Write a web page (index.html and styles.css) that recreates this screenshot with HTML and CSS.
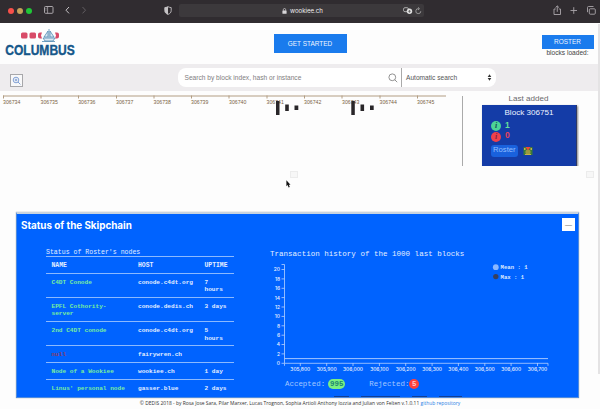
FILE: index.html
```html
<!DOCTYPE html>
<html lang="en">
<head>
<meta charset="utf-8">
<title>Columbus</title>
<link rel="stylesheet" href="styles.css">
</head>
<body>
<div class="window">
  <div class="browser">
    <div class="lights"><i class="red"></i><i class="amber"></i><i class="green"></i></div>
    <svg class="nav" width="44" height="10" viewBox="0 0 44 10" fill="none" stroke="#aaa6aa">
      <rect x=".5" y="1.5" width="8.5" height="6.8" rx="1"/><path d="M3.6 1.5v6.8M1.5 3.3h1M1.5 5h1" stroke-width=".8"/>
      <path d="M25 2l-3 3.2 3 3.2" stroke="#c8c5c8"/><path d="M38.5 2l3 3.2-3 3.2" stroke="#625e62"/>
    </svg>
    <svg class="shield" width="8" height="9" viewBox="0 0 8 9"><path d="M4 .7C2.8 1.3 1.8 1.5.8 1.6v3C.8 6.500 2 7.600 4 8.400 6 7.600 7.200 6.500 7.200 4.600v-3C6.200 1.500 5.200 1.300 4 .7z" fill="none" stroke="#c5c3c5" stroke-width=".9"/><path d="M4 .7v7.700C2 7.600.8 6.500.8 4.600v-3z" fill="#c5c3c5"/></svg>
    <div class="address">
      <svg width="5" height="6" viewBox="0 0 5 6"><rect x=".4" y="2.500" width="4.200" height="3.300" rx=".6" fill="#d8d6d8"/><path d="M1.300 2.800V1.700a1.200 1.200 0 0 1 2.400 0v1.100" fill="none" stroke="#d8d6d8" stroke-width=".7"/></svg>
      <span>wookiee.ch</span>
      <svg class="address-tools" width="19" height="8" viewBox="0 0 19 8" fill="none"><rect x=".5" y=".7" width="5" height="4" rx="1.500" stroke="#aaa"/><circle cx="6.500" cy="4.300" r="2.700" fill="#ddd"/><path d="M5.200 4.300h2.600M6.500 3v2.700" stroke="#555" stroke-width=".7"/><path d="M15.800 1.700a2.500 2.500 0 1 0 2 2.500M15 .3l1.500 1.400L15 3" stroke="#aaa" stroke-width=".8"/></svg>
    </div>
    <svg class="tools" width="44" height="11" viewBox="0 0 44 11" fill="none" stroke="#aaa6aa" stroke-width=".9">
      <path d="M2.700 4H1v5.500h6.500V4H5.800M4.250 6.800V1M2.500 2.600L4.250.9 6 2.600M17.500 5.500h6.500M20.750 2.200v6.600"/><rect x="36.300" y="3.800" width="6" height="5.400" rx="1"/><path d="M34.500 7.200V2.500a1 1 0 0 1 1-1h5"/>
    </svg>
  </div>

  <header class="header">
    <svg class="logo" width="72" height="33" viewBox="0 0 72 33">
      <g fill="#d84b68"><rect x="16" y="4.500" width="6.500" height="6" rx="1.500"/><rect x="24.500" y="4.500" width="6.500" height="6" rx="1.500"/><path d="M37 4.500h-2q-2 0-2 2v2q0 2 2 2h2l-1-3zM50 4.500h2q2 0 2 2v2q0 2-2 2h-2l1-3z"/></g>
      <path d="M44 1v9M43 3l-4 6h4zM45 3l4 6h-4zM38 10h12l-2 3h-8zM37 13.500h13" fill="#dbe8f2" stroke="#518bb4" stroke-width=".8"/>
      <text x=".3" y="26.700" textLength="69.500" lengthAdjust="spacingAndGlyphs">COLUMBUS</text>
    </svg>
    <button class="btn start">GET STARTED</button>
    <div class="roster-box"><button class="btn roster">ROSTER</button><span>blocks loaded:</span></div>
  </header>

  <div class="searchbar">
    <div class="zoom-btn"><svg width="9" height="9" viewBox="0 0 9 9" fill="none" stroke="#648bcb" stroke-width=".8"><circle cx="4" cy="4" r="2.800"/><path d="M6 6l2.400 2.400M2.700 4h2.600M4 2.700v2.600"/></svg></div>
    <div class="search">
      <span>Search by block index, hash or instance</span>
      <svg width="10" height="10" viewBox="0 0 10 10" fill="none" stroke="#777" stroke-width=".8"><circle cx="4.300" cy="4.300" r="3.400"/><path d="M6.800 6.800L9.200 9.200"/></svg>
      <div class="mode">Automatic search<svg width="5" height="7" viewBox="0 0 5 7"><path d="M2.500.3L4.300 3H.7zM2.500 6.700L.7 4h3.600z" fill="#333"/></svg></div>
    </div>
  </div>

  <section class="blocks">
    <svg class="timeline" width="462" height="75" viewBox="0 0 462 75">
      <path d="M3 5H446M3.500 4.500v3M41 4.500v3M78.500 4.500v3M116.500 4.500v3M154 4.500v3M191.500 4.500v3M229 4.500v3M267 4.500v3M304.500 4.500v3M342 4.500v3M380 4.500v3M417.500 4.500v3" stroke="#b29d83" fill="none"/>
      <g class="ticks"><text x="3" y="12.500">306734</text><text x="40.500" y="12.500">306735</text><text x="78.200" y="12.500">306736</text><text x="116" y="12.500">306737</text><text x="153.500" y="12.500">306738</text><text x="191" y="12.500">306739</text><text x="229" y="12.500">306740</text><text x="266.500" y="12.500">306741</text><text x="304" y="12.500">306742</text><text x="342" y="12.500">306743</text><text x="379.500" y="12.500">306744</text><text x="417" y="12.500">306745</text></g>
      <path d="M276 10h3.500v14H276zM285.200 13.500h3.600v6.500h-3.600zM294.500 14.500h3.800v4.500h-3.800zM351.300 10h3.500v14h-3.500zM360.500 13.500h3.600v6.500h-3.600zM370 14.500h3.700v4.500H370z" fill="#292629"/>
    </svg>
    <div class="last">
      <h2>Last added</h2>
      <div class="card">
        <h3>Block 306751</h3>
        <div class="count ok"><i>i</i><b>1</b></div>
        <div class="count bad"><i>i</i><b>0</b></div>
        <div class="card-foot"><span>Roster</span><svg width="10" height="10" viewBox="0 0 10 10"><path d="M.5 1h9v8h-9z" fill="#397c39"/><circle cx="5" cy="6" r="2.600" fill="#9b9a40"/><path d="M2.500 1l2.500 3.500L7.500 1z" fill="#ef4639"/><path d="M1 2h1.500v2H1zM7.500 2H9v2H7.500zM2 8h6v1H2z" fill="#c6b247"/></svg></div>
      </div>
    </div>
  </section>

  <div class="loaders">
    <i></i>
    <svg width="5" height="8" viewBox="0 0 5 8"><path d="M.4.300v6l1.300-1.200.9 2.300 1.200-.5-1-2.200h1.700z" fill="#111"/></svg>
    <i class="end"></i>
  </div>

  <section class="panel">
    <div class="panel-head"><h1>Status of the Skipchain</h1><button>—</button></div>
    <div class="panel-body">
      <div class="nodes">
        <h4>Status of Roster's nodes</h4>
        <div class="row head"><span>NAME</span><span>HOST</span><span>UPTIME</span></div>
        <div class="row tall"><b>C4DT Conode</b><span>conode.c4dt.org</span><span>7<br>hours</span></div>
        <div class="row tall"><b>EPFL Cothority-<br>server</b><span>conode.dedis.ch</span><span>3 days</span></div>
        <div class="row tall"><b>2nd C4DT conode</b><span>conode.c4dt.org</span><span>5<br>hours</span></div>
        <div class="row"><b class="down">null</b><span>fairywren.ch</span><span></span></div>
        <div class="row"><b>Node of a Wookiee</b><span>wookiee.ch</span><span>1 day</span></div>
        <div class="row"><b>Linus' personal node</b><span>gasser.blue</span><span>2 days</span></div>
      </div>
      <div class="history">
        <h4>Transaction history of the 1000 last blocks</h4>
        <svg class="chart" width="300" height="115" viewBox="270 260 300 115">
          <path d="M281.500 264.500h3v98.800h263.500v2.500M284.500 363.300v2.500M281.500 363.300h3M281.500 353.900h3M281.500 344.500h3M281.500 335.200h3M281.500 325.800h3M281.500 316.400h3M281.500 307h3M281.500 297.600h3M281.500 288.300h3M281.500 278.900h3M281.500 269.500h3M300.300 363v3M326.700 363v3M353 363v3M379.400 363v3M405.700 363v3M432.100 363v3M458.400 363v3M484.800 363v3M511.100 363v3M537.500 363v3" fill="none" stroke="#b5d1ff" stroke-width=".8"/>
          <path d="M284.500 358.600H548" stroke="#b5d1ff" stroke-width=".9"/>
          <g class="ylab"><text x="280" y="365.200">0</text><text x="280" y="355.800">2</text><text x="280" y="346.400">4</text><text x="280" y="337.100">6</text><text x="280" y="327.700">8</text><text x="280" y="318.300">10</text><text x="280" y="308.900">12</text><text x="280" y="299.500">14</text><text x="280" y="290.200">16</text><text x="280" y="280.800">18</text><text x="280" y="271.400">20</text></g>
          <g class="xlab"><text x="300.300" y="371.300">305,800</text><text x="326.700" y="371.300">305,900</text><text x="353" y="371.300">306,000</text><text x="379.400" y="371.300">306,100</text><text x="405.700" y="371.300">306,200</text><text x="432.100" y="371.300">306,300</text><text x="458.400" y="371.300">306,400</text><text x="484.800" y="371.300">306,500</text><text x="511.100" y="371.300">306,600</text><text x="537.500" y="371.300">306,700</text></g>
          <circle cx="495.800" cy="267.200" r="2.900" fill="#8bb8ff"/><circle cx="495.800" cy="276.600" r="2.700" fill="#37405f"/>
          <g class="legend"><text x="500.500" y="269.300">Mean : 1</text><text x="500.500" y="278.800">Max : 1</text></g>
        </svg>
        <div class="totals"><span>Accepted:</span><b class="accepted">995</b><span class="rej">Rejected:</span><b class="rejected">5</b></div>
        <div class="cut"><i></i><i class="wide"></i><i></i><i class="mid"></i></div>
      </div>
    </div>
  </section>
  <footer>© DEDIS 2018 - by Rosa Jose Sara, Pilar Marxer, Lucas Trognon, Sophia Artioli Anthony Iozzia and Julian von Felten v.1.0.11 <a>github repository</a></footer>
</div>
</body>
</html>
```
FILE: styles.css
```css
* { box-sizing: border-box; }
body { margin: 0; background: #fdfdfd; font-family: "Liberation Sans", Arial, sans-serif; color: #333; }
h1, h2, h3, h4 { margin: 0; font-weight: normal; }
button { border: 0; padding: 0; font: inherit; }
svg { display: block; flex: none; overflow: visible; }
.window { width: 600px; height: 409px; overflow: hidden; background: linear-gradient(#e4e3e4, #e4e3e4) 598px 24px / 2px 350px no-repeat #fdfdfd; }

.browser { height: 23px; background: #302c30; display: flex; align-items: flex-start; }
.lights { display: flex; gap: 3.400px; padding: 7.500px 0 0 7.500px; width: 44px; }
.lights i { width: 6px; height: 6px; border-radius: 50%; }
.red { background: #f8504a; }
.amber { background: #c5a25b; }
.green { background: #1fc737; }
.nav { margin-top: 5px; }
.shield { margin: 5.500px 0 0 76px; }
.address { width: 245px; height: 13px; margin: 4px 0 0 7px; background: #3c393c; border-radius: 2px; color: #eee; font-size: 6.600px; display: flex; align-items: center; padding-left: 103px; }
.address span { margin-left: 3px; font-family: Inter, sans-serif; font-size: 6.100px; width: 113px; }
.tools { margin: 4.500px 0 0 129px; }

.header { height: 41px; display: flex; width: 598px; }
.logo { margin: 5px 0 0 5px; }
.logo text { font: bold 15.500px "Liberation Sans Narrow", "Liberation Sans", sans-serif; fill: #15578a; stroke: #15578a; stroke-width: .4px; }
.btn { background: #1a7bed; color: #f0f6ff; font-size: 6.450px; display: flex; align-items: center; justify-content: center; }
.start { width: 73px; height: 19px; margin: 11px 0 0 196.500px; }
.roster-box { margin: 11.500px 0 0 195px; width: 52px; text-align: center; font-size: 6.600px; white-space: nowrap; color: #444; line-height: 8px; }
.roster { width: 52px; height: 14px; margin-bottom: .5px; }

.searchbar { width: 598px; height: 27px; background: #eeecee; display: flex; }
.zoom-btn { width: 13px; height: 13px; margin: 9.500px 0 0 9.500px; border: 1px solid #a7a7aa; background: #f8f8f9; display: grid; place-items: center; }
.search { width: 318px; height: 19px; margin: 4px 0 0 155px; border-radius: 8px; background: #fff; display: flex; align-items: center; padding-left: 7px; font-size: 6.620px; color: #807e80; }
.search > span { width: 203px; }
.mode { display: flex; align-items: center; justify-content: space-between; width: 95px; height: 19px; margin-left: 3px; border-left: 1px solid #aaa; padding: 0 4px 0 4.500px; color: #555; font-size: 6.620px; }

.blocks { height: 75px; display: flex; }
.ticks text { font: 5.200px "Liberation Sans", sans-serif; fill: #7a6343; }
.last { width: 117px; padding-left: 20px; background: linear-gradient(#aaa, #aaa) 0 5px / 1px 70px no-repeat; overflow: hidden; }
.last h2 { width: 95px; font-size: 8.100px; line-height: 9px; height: 14px; padding-top: 3px; text-align: center; color: #6c6a6c; padding-right: 2px; }
.card { width: 95px; height: 62px; background: #143ca7; border-right: 1px solid #313a62; box-shadow: 1px 1px 2px #888; padding: 3px 0 0 9px; color: #edf3ff; }
.card h3 { font-size: 8.100px; line-height: 9px; text-align: center; padding-right: 9px; height: 13px; }
.count { display: flex; align-items: center; height: 10.500px; font-size: 8.500px; }
.count i { width: 10px; height: 10px; border-radius: 50%; color: #164d56; font: italic bold 8px/9.500px "Liberation Serif", serif; text-align: center; }
.count b { margin: -3px 0 0 4px; }
.ok i { background: #4cd397; }
.ok b { color: #65df9b; }
.bad i { background: #ef414c; color: #7e2341; }
.bad b { color: #e6435a; }
.card-foot { display: flex; gap: 5px; align-items: center; }
.card-foot span { background: #1961dd; border-radius: 3px; width: 27px; height: 12px; padding-left: 2px; font-size: 7.700px; line-height: 9px; color: #91beff; margin-top: 3px; }
.card-foot svg { margin-top: 2px; }

.loaders { height: 46px; display: flex; padding: 5px 0 0 290px; }
.loaders i { width: 8px; height: 7px; border: 1px solid #ececec; background: #f7f7f7; }
.loaders svg { margin: 9px 0 0 -12px; }
.loaders .end { margin-left: 295px; }

.panel { width: 563px; height: 186px; margin-left: 16px; background: #0063ff; border: 1px solid #4d8be0; border-top: 2px solid #c8d3df; overflow: hidden; font-family: "Liberation Mono", "Courier New", monospace; color: #e3eeff; box-shadow: 0 0 1px #999; }
.panel-head { display: flex; justify-content: space-between; height: 34px; padding: 4px 3px 0 4px; }
.panel h1 { font: 700 9.900px/15px Inter, sans-serif; letter-spacing: -.03px; color: #fff; }
.panel-head button { width: 13px; height: 13px; background: #fff; color: #777; font: 7px/13px "Liberation Sans", sans-serif; }
.panel-body { display: flex; }
.nodes { width: 188px; margin-left: 29px; }
.nodes h4 { font-size: 6.550px; line-height: 10px; height: 9px; border-bottom: 1px solid #8bb9ff; }
.row { display: grid; grid-template-columns: 86.500px 66.500px 1fr; height: 16.700px; padding: 5px 0 0 5.500px; border-bottom: 1px solid #8bb9ff; font-size: 6.120px; line-height: 7.200px; font-weight: bold; }
.row:last-child { border: 0; }
.row b { color: #7aed9c; }
.row .down { color: #8b3c62; }
.head { font-size: 6.400px; height: 17.200px; }
.tall { height: 24.100px; }
.history { margin-left: 36px; width: 300px; }
.history h4 { font-size: 7.540px; line-height: 9px; height: 12px; padding-top: 2px; white-space: nowrap; }
.ylab text, .xlab text { font: 500 4.900px Inter, sans-serif; fill: #e7f0ff; }
.ylab text { text-anchor: end; }
.xlab text { text-anchor: middle; }
.legend text { font: bold 5.650px "Liberation Mono", monospace; fill: #dbe9ff; }
.totals { display: flex; align-items: center; height: 18px; padding-left: 15px; font-size: 7.450px; color: #a5c8ff; }
.totals b { height: 10px; line-height: 10px; border-radius: 5px; text-align: center; }
.accepted { width: 17px; margin-left: 3px; background: #79ef82; color: #1b8571; }
.rej { margin-left: 24px; }
.rejected { width: 10px; background: #ff403c; color: #ffc5c8; }
.cut { display: flex; gap: 12px; padding: 3px 0 0 64px; }
.cut i { width: 15px; height: 1px; background: #123e91; }
.cut .wide { width: 39px; }
.cut .mid { width: 23px; }
footer { font: 4.940px/11px "Open Sans", sans-serif; color: #333; text-align: center; white-space: nowrap; }
footer a { color: #287fe5; }
```
